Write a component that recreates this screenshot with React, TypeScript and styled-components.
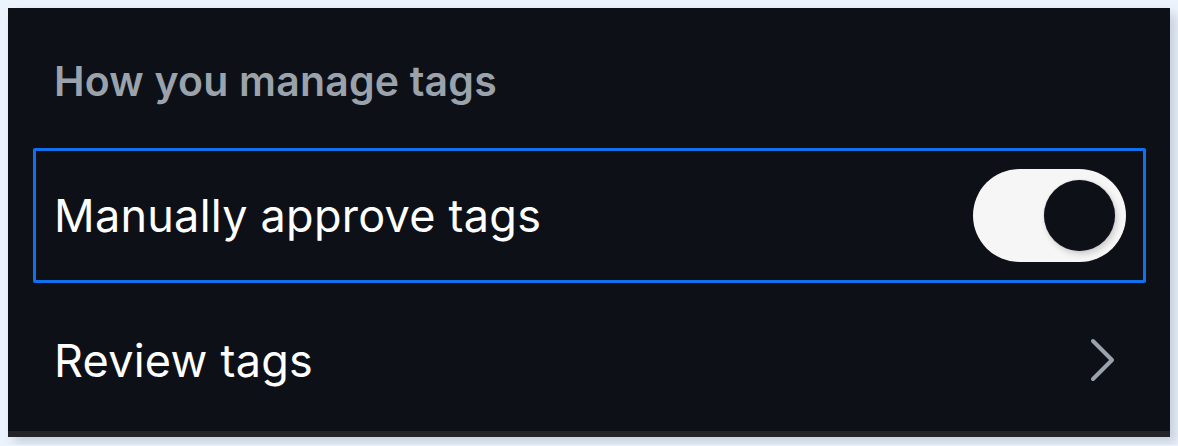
import styled, { createGlobalStyle } from 'styled-components';

const GlobalStyle = createGlobalStyle`
  html, body {
    margin: 0;
    background: #edf3fc;
  }
  body {
    padding: 8px;
    font-family: Inter, "Noto Sans", "Liberation Sans", sans-serif;
  }
`;

const Card = styled.section`
  background: #0d1117;
  border-bottom: 6px solid #222428;
  box-shadow: 6px 6px 10px rgba(110, 128, 156, 0.3);
  padding: 0 24px 4px 25px;
  display: flex;
  flex-direction: column;
`;

const Heading = styled.h2`
  margin: 0;
  height: 140px;
  display: flex;
  align-items: center;
  padding: 6px 0 0 21px;
  box-sizing: border-box;
  color: #9aa2ac;
  font-size: 41px;
  font-weight: 600;
  letter-spacing: 0.2px;
`;

const Row = styled.div<{ focused?: boolean }>`
  height: ${(p) => (p.focused ? 135 : 144)}px;
  box-sizing: border-box;
  display: flex;
  align-items: center;
  justify-content: space-between;
  padding: ${(p) => (p.focused ? '0 17px 0 18px' : '10px 30px 0 21px')};
  border: ${(p) => (p.focused ? '3px solid #1170ee' : 'none')};
  border-radius: 2px;
`;

const Label = styled.span`
  color: #ffffff;
  font-size: 45px;
  font-weight: 400;
  letter-spacing: 0.25px;
`;

const Track = styled.button<{ on: boolean }>`
  width: 153px;
  height: 93px;
  border: 0;
  padding: 0 11px 0 12px;
  border-radius: 47px;
  background: #f6f6f6;
  display: flex;
  align-items: center;
  justify-content: ${(p) => (p.on ? 'flex-end' : 'flex-start')};
  cursor: pointer;
`;

const Knob = styled.span`
  width: 71px;
  height: 71px;
  border-radius: 50%;
  background: #0d1117;
  box-shadow: 2px 3px 6px rgba(0, 0, 0, 0.18), 0 0 1px rgba(0, 0, 0, 0.4);
`;

function Chevron() {
  return (
    <svg width="26" height="44" viewBox="0 0 26 44" fill="none">
      <polyline
        points="3,3 22,22 3,41"
        stroke="#9aa2ac"
        strokeWidth="4"
        strokeLinecap="round"
        strokeLinejoin="round"
      />
    </svg>
  );
}

export default function App() {
  return (
    <>
      <GlobalStyle />
      <Card>
        <Heading>How you manage tags</Heading>
        <Row focused>
          <Label>Manually approve tags</Label>
          <Track on aria-label="Manually approve tags">
            <Knob />
          </Track>
        </Row>
        <Row>
          <Label>Review tags</Label>
          <Chevron />
        </Row>
      </Card>
    </>
  );
}
